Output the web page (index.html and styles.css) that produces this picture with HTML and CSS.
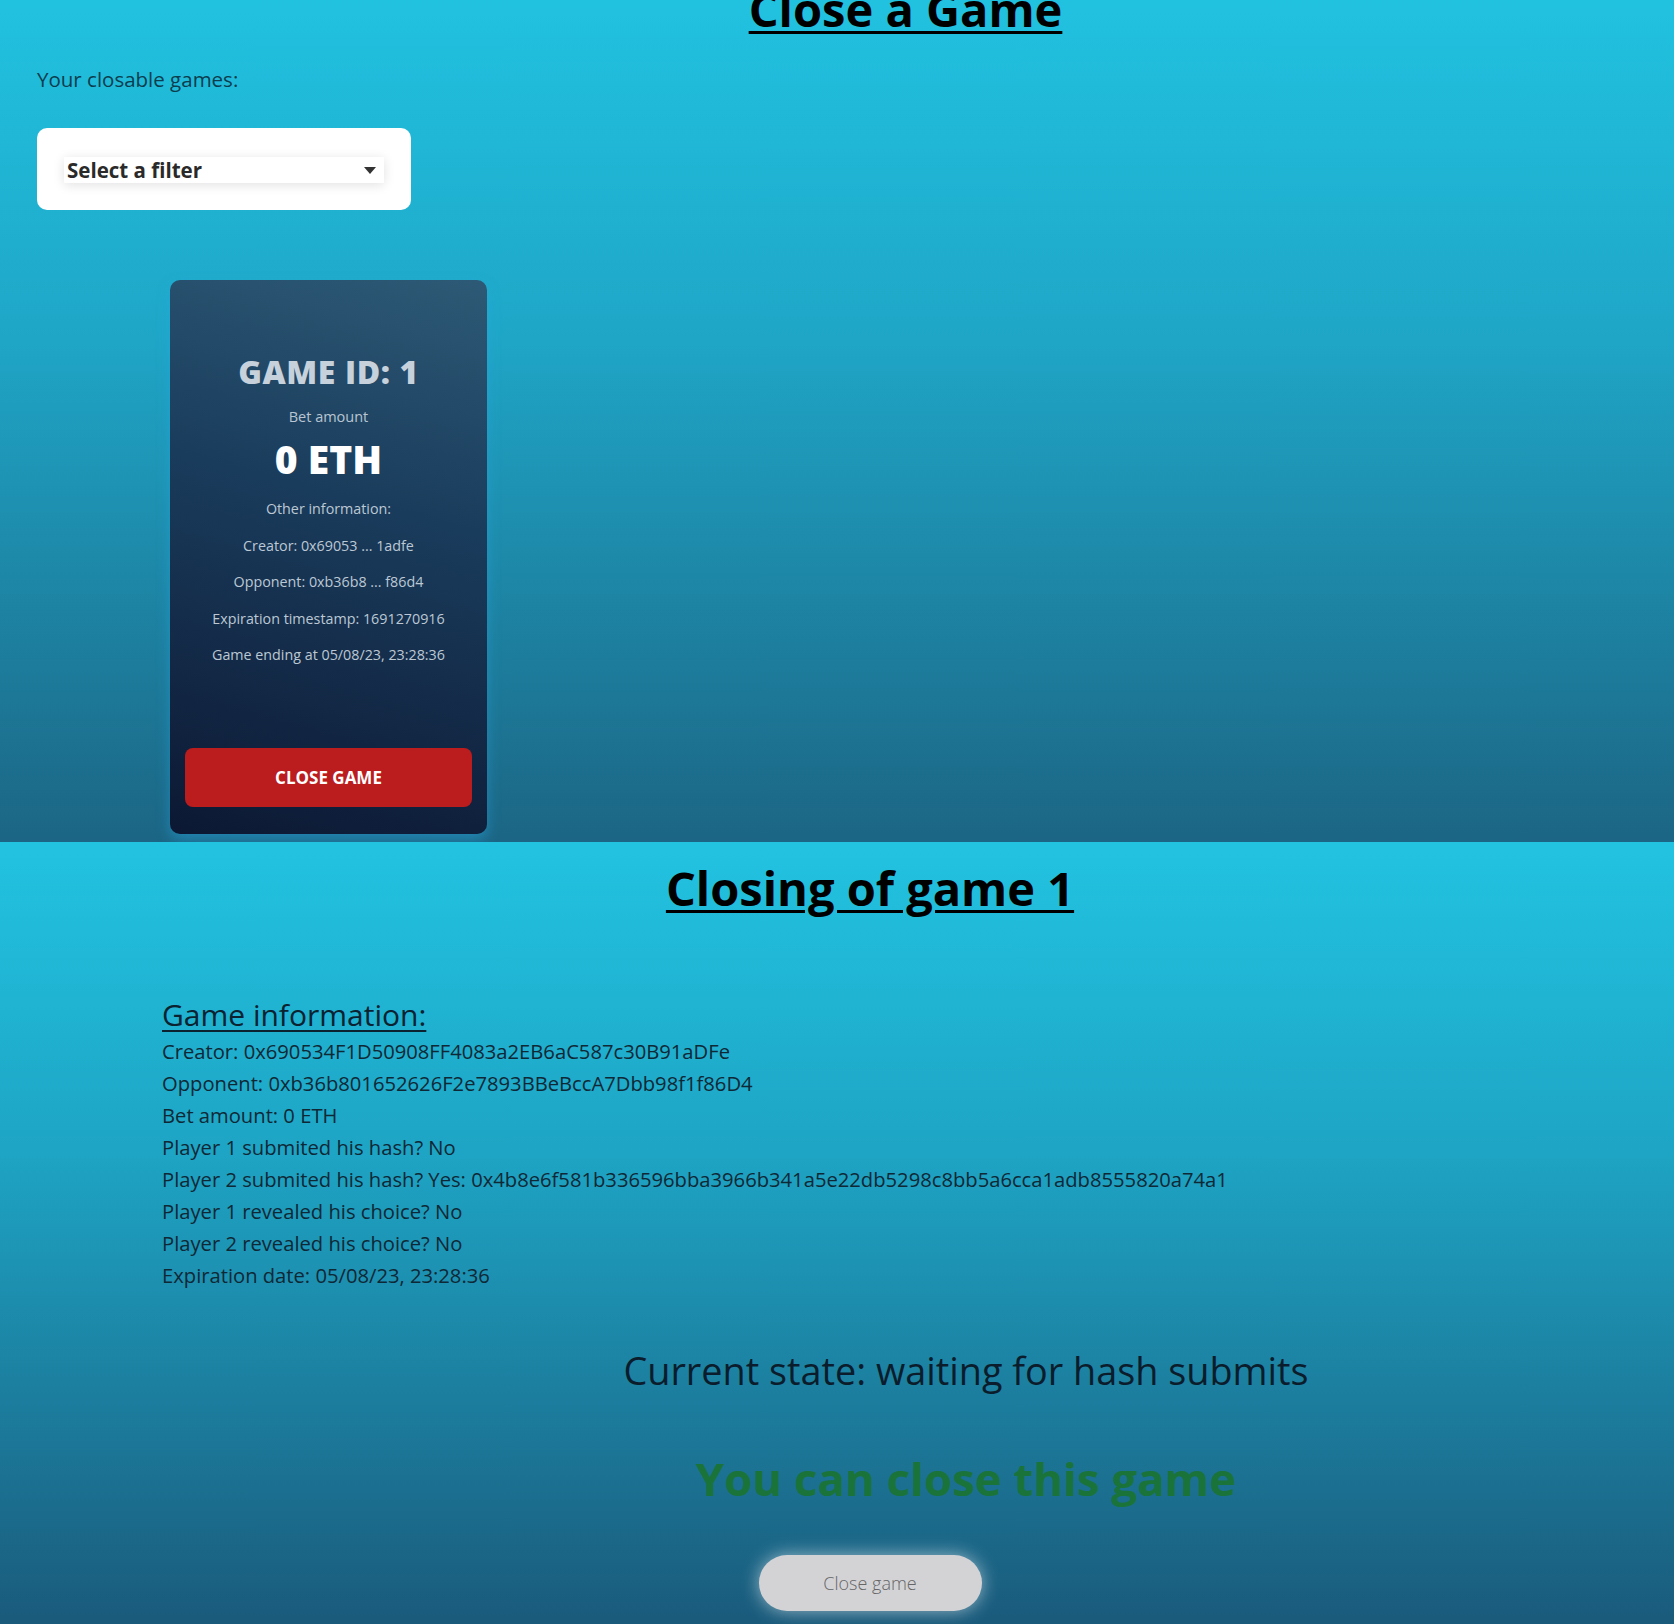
FILE: index.html
```html
<!DOCTYPE html>
<html lang="en">
<head>
<meta charset="utf-8">
<title>Close a Game</title>
<link rel="stylesheet" href="styles.css">
</head>
<body>
<section class="panel panel-list">
  <h1 class="page-title list-title">Close a Game</h1>
  <p class="hint">Your closable games:</p>
  <div class="filter-card">
    <div class="filter-select">
      <span>Select a filter</span>
      <svg class="caret" width="12" height="7" viewBox="0 0 12 7"><path d="M0 0 L12 0 L6 7 Z" fill="#333"/></svg>
    </div>
  </div>
  <div class="games">
    <article class="game-card">
      <h3 class="game-id">GAME ID: 1</h3>
      <p class="bet-label">Bet amount</p>
      <p class="bet-value">0 ETH</p>
      <div class="meta">
        <p>Other information:</p>
        <p>Creator: 0x69053 ... 1adfe</p>
        <p>Opponent: 0xb36b8 ... f86d4</p>
        <p>Expiration timestamp: 1691270916</p>
        <p>Game ending at 05/08/23, 23:28:36</p>
      </div>
      <button class="card-btn">CLOSE GAME</button>
    </article>
  </div>
</section>
<section class="panel panel-detail">
  <h1 class="page-title detail-title">Closing of game 1</h1>
  <div class="info">
    <h2 class="info-title">Game information:</h2>
    <p>Creator: 0x690534F1D50908FF4083a2EB6aC587c30B91aDFe</p>
    <p>Opponent: 0xb36b801652626F2e7893BBeBccA7Dbb98f1f86D4</p>
    <p>Bet amount: 0 ETH</p>
    <p>Player 1 submited his hash? No</p>
    <p>Player 2 submited his hash? Yes: 0x4b8e6f581b336596bba3966b341a5e22db5298c8bb5a6cca1adb8555820a74a1</p>
    <p>Player 1 revealed his choice? No</p>
    <p>Player 2 revealed his choice? No</p>
    <p>Expiration date: 05/08/23, 23:28:36</p>
  </div>
  <p class="state">Current state: waiting for hash submits</p>
  <p class="can-close">You can close this game</p>
  <div class="action">
    <button class="close-btn">Close game</button>
  </div>
</section>
</body>
</html>
```
FILE: styles.css
```css
* { box-sizing: border-box; }
html, body { margin: 0; padding: 0; }
body {
  font-family: "Open Sans", "Noto Sans", sans-serif;
  color: #0d2433;
  background: #1b5c7c;
}
p { margin: 0; }

.panel { overflow: hidden; }

.panel-list {
  height: 842px;
  padding: 0 37px;
  background: linear-gradient(to bottom, #21c2e0 0%, #1fa6c7 40%, #1c6584 100%);
}
.panel-detail {
  min-height: 782px;
  background: linear-gradient(to bottom, #22c3e1 0%, #1ea4c4 40%, #1a5a7b 100%);
}

.page-title {
  margin: 0;
  font-size: 47px;
  line-height: 60px;
  font-weight: 700;
  color: #000;
  text-align: center;
  text-decoration: underline;
  text-decoration-thickness: 3px;
  text-underline-offset: 4px;
}
.list-title {
  margin-top: -21px;
  padding-left: 137px;
}
.detail-title {
  margin-top: 16px;
  padding-left: 66px;
}

.hint {
  margin-top: 26px;
  font-size: 20.5px;
  line-height: 28px;
  color: #0c3d4e;
}

.filter-card {
  margin-top: 35px;
  width: 374px;
  height: 82px;
  padding: 29px 27px 0;
  background: #fff;
  border-radius: 10px;
}
.filter-select {
  display: flex;
  align-items: center;
  justify-content: space-between;
  height: 26px;
  padding: 0 8px 0 3px;
  background: #fff;
  box-shadow: 0 2px 12px rgba(0, 0, 0, 0.12);
  font-size: 20.5px;
  font-weight: 700;
  color: #2a2a2a;
}

.games {
  margin-top: 70px;
  padding-left: 133px;
}
.game-card {
  width: 317px;
  height: 554px;
  padding: 72px 15px 27px;
  display: flex;
  flex-direction: column;
  align-items: center;
  text-align: center;
  border-radius: 10px;
  background: linear-gradient(195deg, #2d5a76 0%, #1a3c5c 40%, #0c1833 100%);
  box-shadow: 0 6px 14px rgba(40, 170, 230, 0.45);
}
.game-id {
  margin: 0;
  font-size: 32px;
  line-height: 40px;
  font-weight: 800;
  letter-spacing: 0.6px;
  color: #c7d1dc;
}
.bet-label {
  margin-top: 15px;
  font-size: 14.5px;
  line-height: 20px;
  color: #b9c5d2;
}
.bet-value {
  margin-top: 10px;
  font-size: 39px;
  line-height: 44px;
  font-weight: 800;
  color: #fff;
}
.meta {
  margin-top: 10px;
  font-size: 14.3px;
  line-height: 36.5px;
  color: #bcc8d4;
}
.card-btn {
  margin-top: auto;
  width: 100%;
  height: 59px;
  border: 0;
  border-radius: 8px;
  background: #bb1c1e;
  color: #fff;
  font-family: "Open Sans", sans-serif;
  font-size: 17px;
  font-weight: 700;
}

.info {
  margin-top: 77px;
  padding-left: 162px;
  font-size: 20.2px;
  line-height: 32px;
  color: #0f2836;
}
.info-title {
  margin: 0;
  font-size: 30px;
  line-height: 40px;
  font-weight: 400;
  text-decoration: underline;
  text-decoration-thickness: 2px;
  text-underline-offset: 4px;
  color: #0b2231;
}

.state {
  margin-top: 56px;
  padding-left: 258px;
  text-align: center;
  font-size: 37.8px;
  line-height: 48px;
  color: #0b1d2c;
}
.can-close {
  margin-top: 55px;
  padding-left: 258px;
  text-align: center;
  font-size: 45.5px;
  line-height: 56px;
  font-weight: 700;
  color: #1a7339;
}

.action {
  margin-top: 49px;
  padding-left: 66px;
  text-align: center;
}
.close-btn {
  width: 223px;
  height: 56px;
  border: 0;
  border-radius: 28px;
  background: #d3d3d6;
  color: #666;
  font-family: "Open Sans", sans-serif;
  font-size: 18px;
  font-weight: 300;
  box-shadow: 0 0 18px rgba(255, 255, 255, 0.55);
}
```
